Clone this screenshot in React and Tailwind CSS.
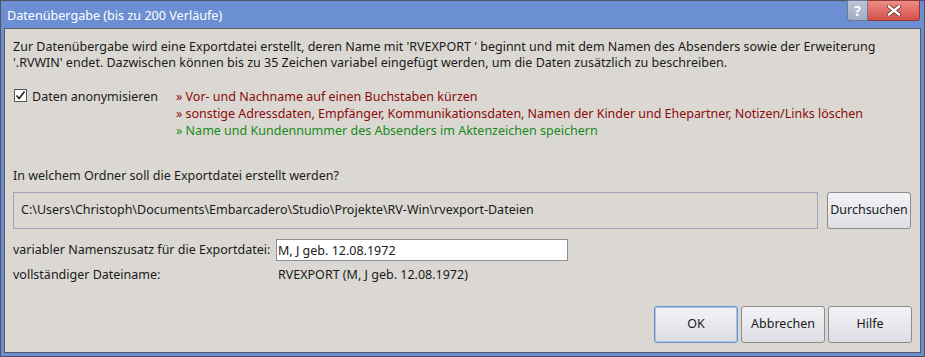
import React, { useState } from 'react';

const font = { fontFamily: '"Noto Sans", "Open Sans", Arial, sans-serif' };

// Windows-style push button
const WinButton = ({ label, focused, className = '' }) => (
  <button
    className={`h-[37px] rounded-[3px] border text-[12.5px] text-[#1a1a1a] bg-gradient-to-b from-[#f3f3f6] to-[#dddde6] ${
      focused ? 'border-[#6f94c9] shadow-[inset_0_0_0_1px_#a9c3e6]' : 'border-[#8c8c8c]'
    } ${className}`}
  >
    {label}
  </button>
);

const App = () => {
  const [anon, setAnon] = useState(true);
  const [suffix, setSuffix] = useState('M, J geb. 12.08.1972');

  return (
    <div style={font} className="w-[925px] h-[357px] flex flex-col border border-[#4f5560] bg-[#6b8fd2] px-[3px] pb-[3px]">
      {/* title bar */}
      <div className="h-[27px] flex justify-between items-start">
        <div className="pl-[3px] pt-[6px] text-[12.6px] leading-[18px] text-white">
          Datenübergabe (bis zu 200 Verläufe)
        </div>
        <div className="flex -mt-px mr-[1px]">
          <div className="w-[21px] h-[21px] flex items-center justify-center bg-gradient-to-b from-[#bcc5d6] to-[#a2adc2] border border-[#6d7892] rounded-bl-[3px] text-white text-[14px] font-bold leading-none">
            ?
          </div>
          <div className="w-[52px] h-[21px] flex items-center justify-center bg-gradient-to-b from-[#ee8b86] to-[#d24f49] border border-[#8e3a36] border-l-0 rounded-br-[3px]">
            <svg width="14" height="11" viewBox="0 0 14 11">
              <path d="M2 1.5 L12 9.5 M12 1.5 L2 9.5" stroke="#5a2a28" strokeWidth="4" strokeLinecap="square" />
              <path d="M2 1.5 L12 9.5 M12 1.5 L2 9.5" stroke="#ffffff" strokeWidth="2.4" strokeLinecap="square" />
            </svg>
          </div>
        </div>
      </div>

      {/* client area */}
      <div className="flex-1 border border-[#555a63] bg-[#dbd8d3] text-[12.5px] text-[#1a1a1a] pl-[8px] pr-[7px] pt-[10px]">
        <p className="leading-[16px]">
          Zur Datenübergabe wird eine Exportdatei erstellt, deren Name mit 'RVEXPORT ' beginnt und mit dem Namen des Absenders sowie der Erweiterung
          '.RVWIN' endet. Dazwischen können bis zu 35 Zeichen variabel eingefügt werden, um die Daten zusätzlich zu beschreiben.
        </p>

        <div className="flex mt-[17px]">
          <label className="w-[163px] flex items-start gap-[5px] pl-[1px] leading-[17px]">
            <span
              onClick={() => setAnon(!anon)}
              className="mt-[1px] w-[13px] h-[13px] border border-[#555] bg-white flex items-center justify-center"
            >
              {anon && (
                <svg width="11" height="11" viewBox="0 0 11 11">
                  <path d="M1.5 5.5 L4.2 8.5 L9.5 1.5" stroke="#222" strokeWidth="1.6" fill="none" />
                </svg>
              )}
            </span>
            Daten anonymisieren
          </label>
          <div className="leading-[17px]">
            <div className="text-[#8b0a0a]">» Vor- und Nachname auf einen Buchstaben kürzen</div>
            <div className="text-[#8b0a0a] tracking-[-0.03px]">» sonstige Adressdaten, Empfänger, Kommunikationsdaten, Namen der Kinder und Ehepartner, Notizen/Links löschen</div>
            <div className="text-[#198a19]">» Name und Kundennummer des Absenders im Aktenzeichen speichern</div>
          </div>
        </div>

        <div className="mt-[28px] leading-[17px]">In welchem Ordner soll die Exportdatei erstellt werden?</div>

        <div className="flex items-center gap-[9px] mt-[8px]">
          <div className="w-[805px] h-[37px] border border-[#a3a3b8] flex items-center pl-[7px]">
            C:\Users\Christoph\Documents\Embarcadero\Studio\Projekte\RV-Win\rvexport-Dateien
          </div>
          <WinButton label="Durchsuchen" className="w-[84px]" />
        </div>

        <div className="flex items-center mt-[10px]">
          <span className="w-[263px]">variabler Namenszusatz für die Exportdatei:</span>
          <input
            value={suffix}
            onChange={e => setSuffix(e.target.value)}
            className="w-[292px] h-[22px] bg-white border border-[#8f8f9a] px-[1px] outline-none"
          />
        </div>

        <div className="flex mt-[5px] leading-[17px]">
          <span className="w-[265px]">vollständiger Dateiname:</span>
          <span>RVEXPORT ({suffix})</span>
        </div>

        <div className="flex justify-end gap-[3px] mt-[23px] pr-[1px]">
          <WinButton label="OK" focused className="w-[84px]" />
          <WinButton label="Abbrechen" className="w-[84px]" />
          <WinButton label="Hilfe" className="w-[84px]" />
        </div>
      </div>
    </div>
  );
};

export default App;
